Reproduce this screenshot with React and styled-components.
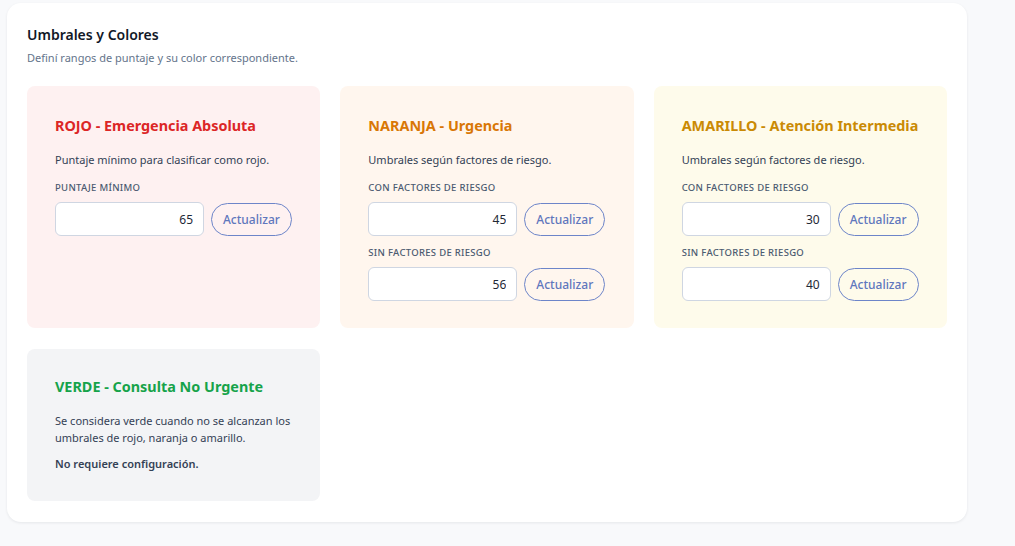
import React from 'react';
import styled, { createGlobalStyle } from 'styled-components';

const GlobalStyle = createGlobalStyle`
    html, body {
        margin: 0;
        padding: 0;
        background: #f8f9fb;
        font-family: "Noto Sans", "Open Sans", sans-serif;
        color: #1e293b;
    }
    * { box-sizing: border-box; }
`;

const Page = styled.div`
    padding: 3px 48px 24px 7px;
    min-height: 546px;
`;

const Panel = styled.section`
    background: #fff;
    border-radius: 14px;
    box-shadow: 0 1px 3px rgba(15, 23, 42, 0.08);
    padding: 22px 20px 21px;
`;

const Heading = styled.h2`
    margin: 0;
    font-size: 14px;
    font-weight: 600;
    line-height: 20px;
    color: #111827;
`;

const Sub = styled.p`
    margin: 5px 0 0;
    font-size: 11px;
    line-height: 16px;
    color: #64748b;
`;

const Grid = styled.div`
    margin-top: 20px;
    display: grid;
    grid-template-columns: repeat(3, minmax(0, 1fr));
    gap: 21px 20px;
    align-items: start;
`;

const Tile = styled.div`
    background: ${p => p.bg};
    border-radius: 8px;
    padding: ${p => p.top || 30}px 28px ${p => p.bottom || 27}px;
    min-height: ${p => p.minH || 0}px;
`;

const TileTitle = styled.h3`
    margin: 0;
    font-size: 14.4px;
    font-weight: 700;
    line-height: 20px;
    white-space: nowrap;
    color: ${p => p.color};
`;

const Desc = styled.p`
    margin: 15px 0 0;
    font-size: 11px;
    line-height: 17px;
    color: #334155;
    & + & { margin-top: 9px; }
    font-weight: ${p => (p.strong ? 600 : 400)};
`;

const Label = styled.div`
    margin-top: ${p => p.first ? 13 : 10}px;
    font-size: 9.5px;
    font-weight: 500;
    letter-spacing: 0.3px;
    line-height: 14px;
    color: #4b5a70;
    text-transform: uppercase;
`;

const Row = styled.div`
    margin-top: 7px;
    display: flex;
    align-items: center;
    gap: 7px;
`;

const Input = styled.input`
    width: 149px;
    height: 34px;
    border: 1px solid #cfd6e2;
    border-radius: 6px;
    background: #fff;
    text-align: right;
    padding: 0 10px;
    font-family: inherit;
    font-size: 12px;
    color: #1f2937;
    outline: none;
`;

const Button = styled.button`
    height: 33px;
    padding: 0 11px;
    border: 1px solid #6d85c9;
    border-radius: 999px;
    background: transparent;
    font-family: inherit;
    font-size: 12px;
    font-weight: 500;
    color: #5f77bd;
    cursor: pointer;
`;

const Field = ({ label, value, first }) => (
    <>
        <Label first={first}>{label}</Label>
        <Row>
            <Input defaultValue={value} />
            <Button>Actualizar</Button>
        </Row>
    </>
);

const App = () => (
    <>
        <GlobalStyle />
        <Page>
            <Panel>
                <Heading>Umbrales y Colores</Heading>
                <Sub>Definí rangos de puntaje y su color correspondiente.</Sub>
                <Grid>
                    <Tile bg="#fef1f1" minH={242}>
                        <TileTitle color="#dc2626">ROJO - Emergencia Absoluta</TileTitle>
                        <Desc>Puntaje mínimo para clasificar como rojo.</Desc>
                        <Field first label="Puntaje mínimo" value="65" />
                    </Tile>
                    <Tile bg="#fff6ee" minH={242}>
                        <TileTitle color="#d97706">NARANJA - Urgencia</TileTitle>
                        <Desc>Umbrales según factores de riesgo.</Desc>
                        <Field first label="Con factores de riesgo" value="45" />
                        <Field label="Sin factores de riesgo" value="56" />
                    </Tile>
                    <Tile bg="#fefbeb" minH={242}>
                        <TileTitle color="#ca8a04">AMARILLO - Atención Intermedia</TileTitle>
                        <Desc>Umbrales según factores de riesgo.</Desc>
                        <Field first label="Con factores de riesgo" value="30" />
                        <Field label="Sin factores de riesgo" value="40" />
                    </Tile>
                    <Tile bg="#f3f4f6" top={28} bottom={29}>
                        <TileTitle color="#16a34a">VERDE - Consulta No Urgente</TileTitle>
                        <Desc>Se considera verde cuando no se alcanzan los umbrales de rojo, naranja o amarillo.</Desc>
                        <Desc strong>No requiere configuración.</Desc>
                    </Tile>
                </Grid>
            </Panel>
        </Page>
    </>
);

export default App;
